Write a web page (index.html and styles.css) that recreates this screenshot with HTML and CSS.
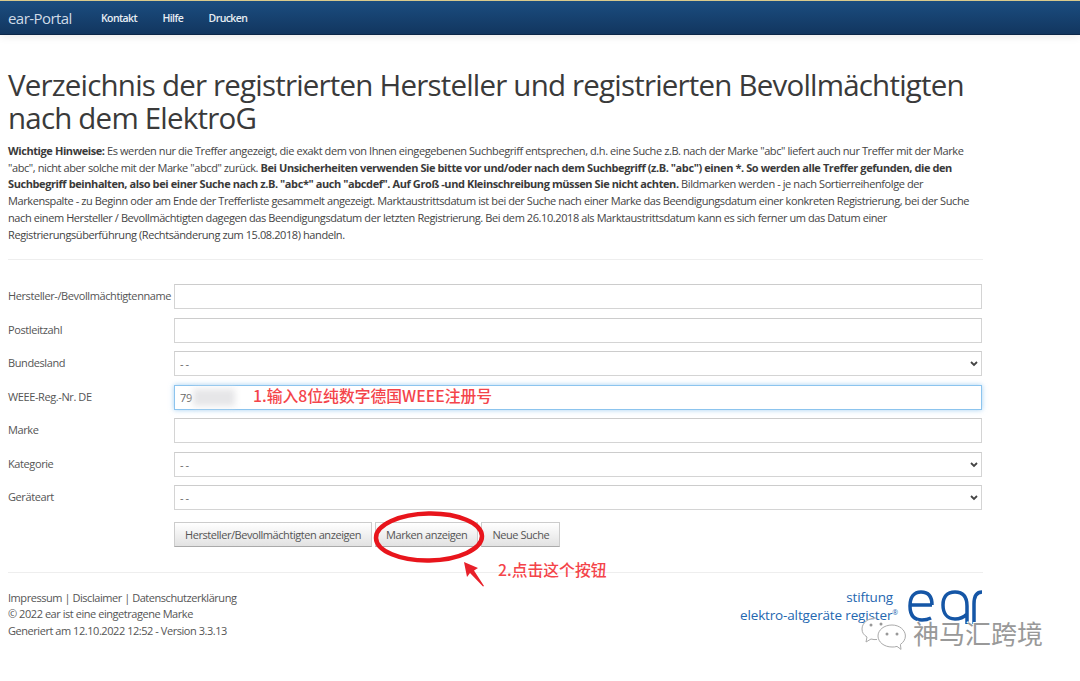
FILE: index.html
```html
<!DOCTYPE html>
<html lang="de">
<head>
<meta charset="utf-8">
<title>ear-Portal</title>
<link rel="stylesheet" href="styles.css">
</head>
<body>
<nav class="navbar">
  <a class="brand">ear-Portal</a>
  <a class="nav-link">Kontakt</a>
  <a class="nav-link">Hilfe</a>
  <a class="nav-link">Drucken</a>
</nav>
<main class="page">
  <h1>Verzeichnis der registrierten Hersteller und registrierten Bevollmächtigten nach dem ElektroG</h1>
  <p class="intro"><b>Wichtige Hinweise:</b> Es werden nur die Treffer angezeigt, die exakt dem von Ihnen eingegebenen Suchbegriff entsprechen, d.h. eine Suche z.B. nach der Marke "abc" liefert auch nur Treffer mit der Marke "abc", nicht aber solche mit der Marke "abcd" zurück. <b>Bei Unsicherheiten verwenden Sie bitte vor und/oder nach dem Suchbegriff (z.B. "abc") einen *. So werden alle Treffer gefunden, die den Suchbegriff beinhalten, also bei einer Suche nach z.B. "abc*" auch "abcdef". Auf Groß -und Kleinschreibung müssen Sie nicht achten.</b> Bildmarken werden - je nach Sortierreihenfolge der Markenspalte - zu Beginn oder am Ende der Trefferliste gesammelt angezeigt. Marktaustrittsdatum ist bei der Suche nach einer Marke das Beendigungsdatum einer konkreten Registrierung, bei der Suche nach einem Hersteller / Bevollmächtigten dagegen das Beendigungsdatum der letzten Registrierung. Bei dem 26.10.2018 als Marktaustrittsdatum kann es sich ferner um das Datum einer Registrierungsüberführung (Rechtsänderung zum 15.08.2018) handeln.</p>
  <hr class="rule rule-top">
  <form class="search">
    <label>Hersteller-/Bevollmächtigtenname</label><input class="field" type="text">
    <label>Postleitzahl</label><input class="field" type="text">
    <label>Bundesland</label><div class="field select">- -<svg viewBox="0 0 8 6" class="chev"><path d="M1 1l3 3 3-3"/></svg></div>
    <label>WEEE-Reg.-Nr. DE</label>
    <div class="field focus">79<span class="blur"></span><span class="note note-1">1.输入8位纯数字德国WEEE注册号</span></div>
    <label>Marke</label><input class="field" type="text">
    <label>Kategorie</label><div class="field select">- -<svg viewBox="0 0 8 6" class="chev"><path d="M1 1l3 3 3-3"/></svg></div>
    <label>Geräteart</label><div class="field select">- -<svg viewBox="0 0 8 6" class="chev"><path d="M1 1l3 3 3-3"/></svg></div>
    <div class="buttons">
      <button type="button">Hersteller/Bevollmächtigten anzeigen</button>
      <button type="button">Marken anzeigen</button>
      <button type="button">Neue Suche</button>
      <svg class="ring" viewBox="0 0 112 54"><ellipse cx="56" cy="27" rx="53" ry="23.500" transform="rotate(-1 56 27)"/></svg>
    </div>
  </form>
  <hr class="rule rule-bottom">
  <footer class="footer">
    <div class="legal">
      <div>Impressum | Disclaimer | Datenschutzerklärung</div>
      <div>© 2022 ear ist eine eingetragene Marke</div>
      <div>Generiert am 12.10.2022 12:52 - Version 3.3.13</div>
    </div>
    <div class="logo">
      <div class="logo-text"><span class="logo-top">stiftung</span><span>elektro-altgeräte register<sup>®</sup></span></div>
      <svg class="logo-mark" viewBox="0 0 74 34"><path d="M3 15h21M24 15C24 6 20 2 13 2S2 7 2 16s4 14 12 14c4 0 7-1 9-2M59 34V16C59 7 55 2 47 2S35 7 35 15s4 14 12 14c5 0 9-2 12-5M66 34V14C66 6 69 2 74 2"/></svg>
    </div>
  </footer>
</main>
<span class="note note-2">2.点击这个按钮</span>
<svg class="arrow" viewBox="0 0 24 26"><path d="M2 1 16 7l-4 2.500L22 25l-1 .5L8 12l-3 4z"/></svg>
<div class="watermark">
  <svg class="wechat" viewBox="0 0 46 34"><path class="b1" d="M15 2C7 2 1 7 1 13c0 4 2 6 5 8l-1 5 5-3c2 .6 4 .7 6 .5"/><path class="b2" d="M31 9c-8 0-14 5-14 11s6 11 14 11c2 0 3 0 5-.6l4 3-.6-5c3-2 5-5 5-8.400 0-6-6-11-13.400-11z"/><circle cx="26" cy="18" r="1.500"/><circle cx="36" cy="18" r="1.500"/><circle cx="10" cy="9" r="1.500"/><circle cx="20" cy="8" r="1.500"/></svg>
  <span>神马汇跨境</span>
</div>
</body>
</html>
```

FILE: styles.css
```css
* { box-sizing: border-box; }
html, body { margin: 0; padding: 0; }
body {
  position: relative;
  width: 1080px;
  height: 681px;
  overflow: hidden;
  background: #fff;
  color: #444;
  font-family: "Open Sans", "Noto Sans", sans-serif;
  font-size: 11px;
  letter-spacing: -.4px;
}
.navbar {
  display: flex;
  align-items: center;
  height: 35px;
  padding: 0 0 0 8px;
  background: linear-gradient(#1b4d80, #12365f);
  border-top: 1px solid #d8c98c;
  border-bottom: 1px solid #0c2748;
  box-shadow: 0 2px 8px rgba(0,0,0,.08);
}
.brand { color: #cfdbe7; font-size: 15px; letter-spacing: -.55px; width: 93px; }
.nav-link { color: #e8eef4; font-size: 10.500px; font-weight: 600; letter-spacing: -.6px; margin-right: 25.500px; }
.page { width: 982px; margin-left: 8px; }
h1 {
  margin: 33px 0 0;
  font-size: 29.500px;
  line-height: 33px;
  font-weight: 400;
  letter-spacing: -.8px;
  color: #3a3a3a;
}
.intro { margin: 9px 0 0; line-height: 16.700px; width: 970px; letter-spacing: -.41px; }
.intro b { color: #3a3a3a; }
.rule { border: 0; border-top: 1px solid #eee; margin: 0; height: 0; width: 975px; }
.rule-top { margin-top: 16px; }
.rule-bottom { margin-top: 25px; }
.search {
  display: grid;
  grid-template-columns: 166px 808px;
  row-gap: 8.500px;
  align-items: center;
  margin-top: 24px;
}
label { color: #555; white-space: nowrap; padding-bottom: 2px; }
.field {
  display: block;
  height: 25px;
  width: 808px;
  padding: 0 5px;
  border: 1px solid #d4d4d4;
  border-top-color: #ccc;
  background: #fff;
  font: inherit;
  letter-spacing: inherit;
  line-height: 23px;
  color: #666;
}
.select { position: relative; }
.chev {
  position: absolute;
  right: 3px;
  top: 9px;
  width: 8px;
  height: 6px;
  fill: none;
  stroke: #444;
  stroke-width: 1.800;
}
.focus {
  position: relative;
  border-color: #8cc4ee;
  box-shadow: 0 0 5px rgba(102,175,233,.6);
}
.blur {
  position: absolute;
  left: 18px;
  top: 3px;
  width: 42px;
  height: 17px;
  background: #e6e6e8;
  filter: blur(3px);
}
.note { color: #f4444a; font-family: "Noto Sans CJK SC", "Noto Sans", sans-serif; font-weight: 500; letter-spacing: 0; white-space: nowrap; }
.note-1 { position: absolute; left: 78px; top: -2px; font-size: 15.800px; line-height: 23px; }
.note-2 { position: absolute; left: 498px; top: 559px; font-size: 15.800px; line-height: 22px; }
.buttons {
  grid-column: 2;
  position: relative;
  display: flex;
  gap: 3px;
  margin-top: 3px;
}
button {
  height: 25px;
  padding: 0 10px;
  border: 1px solid #ccc;
  border-bottom-color: #aaa;
  background: linear-gradient(#fff, #e2e2e2);
  font: inherit;
  letter-spacing: -.44px;
  color: #555;
}
.ring {
  position: absolute;
  left: 199px;
  top: -12px;
  width: 112px;
  height: 54px;
  fill: none;
  stroke: #e8151c;
  stroke-width: 4.500;
}
.footer {
  display: flex;
  justify-content: space-between;
  width: 974px;
  margin-top: 17px;
  color: #555;
  letter-spacing: -.45px;
}
.legal { line-height: 16.700px; }
.logo { display: flex; align-items: flex-start; margin-top: -2px; }
.logo-text {
  display: flex;
  flex-direction: column;
  align-items: flex-end;
  color: #2467b0;
  font-size: 13.500px;
  letter-spacing: -.15px;
  line-height: 18px;
}
.logo-top { margin-right: 5px; }
.logo-text sup { font-size: 7px; line-height: 0; }
.logo-mark {
  width: 74px;
  height: 34px;
  margin: 2px 0 0 10px;
  fill: none;
  stroke: #1556a6;
  stroke-width: 3.500;
}
.arrow { position: absolute; left: 462px; top: 561px; width: 24px; height: 26px; fill: #e8202a; }
.watermark {
  position: absolute;
  left: 861px;
  top: 616px;
  display: flex;
  align-items: center;
  gap: 6px;
  color: #999;
  font-family: "Noto Sans CJK SC", sans-serif;
  font-size: 26px;
  letter-spacing: 0;
  line-height: 30px;
  text-shadow: 1px 1px 0 #fff, -1px -1px 0 #fff;
}
.wechat { width: 46px; height: 34px; fill: rgba(255,255,255,.7); stroke: #aaa; stroke-width: 1; }
.wechat circle { fill: #999; stroke: none; }
```
